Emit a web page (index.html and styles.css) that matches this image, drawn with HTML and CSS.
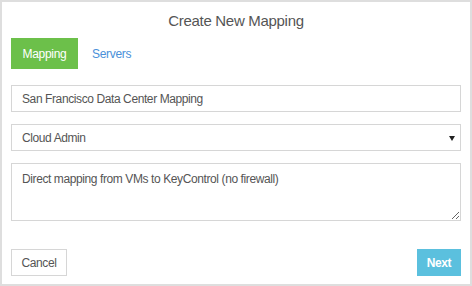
FILE: index.html
```html
<!DOCTYPE html>
<html>
<head>
<meta charset="utf-8">
<link rel="stylesheet" href="styles.css">
</head>
<body>
<div class="dialog">
  <div class="title">Create New Mapping</div>
  <div class="tabs">
    <span class="tab active">Mapping</span>
    <span class="tab">Servers</span>
  </div>
  <form class="form">
    <input class="field" type="text" value="San Francisco Data Center Mapping">
    <div class="select-wrap">
      <select class="field select"><option>Cloud Admin</option></select>
      <span class="caret"></span>
    </div>
    <textarea class="field area">Direct mapping from VMs to KeyControl (no firewall)</textarea>
  </form>
  <div class="footer">
    <button class="btn cancel" type="button">Cancel</button>
    <button class="btn next" type="button">Next</button>
  </div>
</div>
</body>
</html>
```
FILE: styles.css
```css
html, body { margin: 0; padding: 0; background: #fff; }
body { font-family: "Liberation Sans", Arial, sans-serif; color: #555; }
.dialog {
  width: 472px; height: 286px; box-sizing: border-box;
  border: 2px solid #dedede;
  padding: 0 9px 8px;
  display: flex; flex-direction: column;
}
.title {
  text-align: center; font-size: 15px; line-height: 20px; letter-spacing: -0.3px;
  padding-top: 9px; height: 36px; box-sizing: border-box; color: #555;
}
.tabs { display: flex; gap: 2px; height: 31px; }
.tab {
  display: flex; align-items: center; padding: 0 12px;
  font-size: 12px; letter-spacing: -0.3px; color: #4a90d9;
}
.tab.active { background: #6cc04a; color: #fff; width: 67px; box-sizing: border-box; justify-content: center; padding: 0; }
.form { display: flex; flex-direction: column; gap: 12px; margin: 16px 0 0; }
.field {
  display: block; width: 100%; box-sizing: border-box; margin: 0;
  border: 1px solid #d6d6d6; border-radius: 0; background: #fff;
  font-family: "Liberation Sans", Arial, sans-serif; font-size: 12px; letter-spacing: -0.4px; color: #555;
  height: 27px; padding: 0 10px; outline: none;
}
.select-wrap { position: relative; }
.select { appearance: none; -webkit-appearance: none; }
.caret {
  position: absolute; right: 6px; top: 12px;
  width: 0; height: 0;
  border-left: 3px solid transparent; border-right: 3px solid transparent;
  border-top: 5px solid #222;
}
.area { height: 58px; padding: 8px 10px; resize: vertical; line-height: 15px; }
.footer { display: flex; justify-content: space-between; margin-top: auto; }
.btn {
  height: 27px; font-family: "Liberation Sans", Arial, sans-serif; font-size: 12px; letter-spacing: -0.4px;
  border-radius: 0; margin: 0;
}
.cancel { width: 56px; background: #fff; border: 1px solid #d6d6d6; color: #555; }
.next { width: 44px; background: #5bc0de; border: 1px solid #5bc0de; color: #fff; font-weight: bold; }
```
